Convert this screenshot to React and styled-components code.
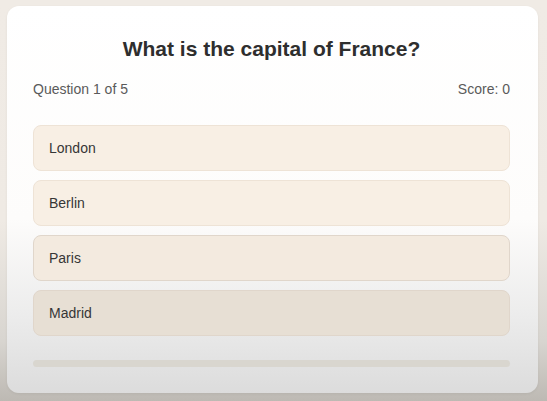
import React from 'react';
import styled, { createGlobalStyle } from 'styled-components';

const GlobalStyle = createGlobalStyle`
    html, body {
        margin: 0;
        padding: 0;
    }
    body {
        font-family: 'Liberation Sans', Arial, sans-serif;
        background: linear-gradient(180deg, #f0ebe5 0%, #efeae4 55%, #d8d5d0 85%, #bdb9b3 100%);
        height: 401px;
        overflow: hidden;
    }
`

const Page = styled.div`
    padding: 6px 9px 8px 7px;
    height: 401px;
    box-sizing: border-box;
`

const Card = styled.div`
    height: 100%;
    box-sizing: border-box;
    background: linear-gradient(180deg, #ffffff 0%, #fdfcfb 55%, #ececec 80%, #dcdcdc 100%);
    border-radius: 12px;
    padding: 30px 28px 0 26px;
    display: flex;
    flex-direction: column;
    box-shadow: 0 1px 3px rgba(0, 0, 0, 0.06);
`

const Title = styled.h2`
    margin: 0;
    text-align: center;
    font-size: 21px;
    font-weight: bold;
    color: #2e2e2e;
    line-height: 26px;
`

const Meta = styled.div`
    display: flex;
    justify-content: space-between;
    margin-top: 19px;
    font-size: 14px;
    color: #5a5a5a;
    line-height: 16px;
`

const Options = styled.div`
    display: flex;
    flex-direction: column;
    gap: 9px;
    margin-top: 28px;
`

const Option = styled.button`
    height: 46px;
    box-sizing: border-box;
    text-align: left;
    padding: 0 15px;
    border: 1px solid ${props => props.$shade ? '#e0d6cb' : '#eee3d6'};
    border-radius: 8px;
    background: ${props => props.$shade || '#f8efe4'};
    font-family: 'Liberation Sans', Arial, sans-serif;
    font-size: 14px;
    color: #363636;
    cursor: pointer;
`

const Progress = styled.div`
    margin-top: 24px;
    height: 7px;
    border-radius: 4px;
    background: #d9d6cf;
`

const answers = [
    { label: 'London' },
    { label: 'Berlin' },
    { label: 'Paris', shade: '#f3eadf' },
    { label: 'Madrid', shade: '#e7dfd4' },
]

export default function App() {
    return (
        <Page>
            <GlobalStyle />
            <Card>
                <Title>What is the capital of France?</Title>
                <Meta>
                    <span>Question 1 of 5</span>
                    <span>Score: 0</span>
                </Meta>
                <Options>
                    {answers.map(a => (
                        <Option key={a.label} $shade={a.shade}>{a.label}</Option>
                    ))}
                </Options>
                <Progress />
            </Card>
        </Page>
    );
}
